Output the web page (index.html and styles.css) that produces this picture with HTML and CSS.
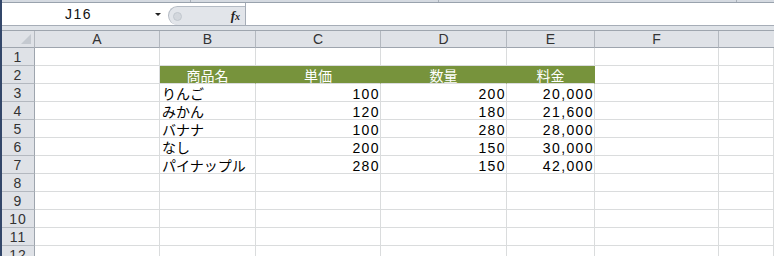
FILE: index.html
```html
<!DOCTYPE html>
<html lang="ja">
<head>
  <meta charset="UTF-8" />
  <title>Book1</title>
  <link rel="stylesheet" href="styles.css">
</head>
<body>
  <!-- bottom edge of the ribbon -->
  <div class="ribbon-edge">
    <span class="sep s1"></span>
    <span class="sep s2"></span>
    <span class="sep s3"></span>
  </div>

  <!-- name box + formula bar -->
  <div class="fbar">
    <div class="namebox">
      <span class="name">J16</span>
      <span class="drop"></span>
    </div>
    <div class="fx-area">
      <span class="knob"></span>
      <span class="fx"><i>f</i><i class="x">x</i></span>
    </div>
    <div class="finput"></div>
  </div>
  <div class="gap"></div>

  <div class="sheet">
    <div class="corner"><span class="tri"></span></div>
    <div class="ch">A</div>
    <div class="ch">B</div>
    <div class="ch">C</div>
    <div class="ch">D</div>
    <div class="ch">E</div>
    <div class="ch">F</div>
    <div class="ch last"></div>

    <div class="rh">1</div>
    <div class="c"></div><div class="c"></div><div class="c"></div><div class="c"></div><div class="c"></div><div class="c"></div><div class="c"></div>

    <div class="rh">2</div>
    <div class="c"></div>
    <div class="c hd">商品名</div>
    <div class="c hd">単価</div>
    <div class="c hd">数量</div>
    <div class="c hd">料金</div>
    <div class="c"></div><div class="c"></div>

    <div class="rh">3</div>
    <div class="c"></div>
    <div class="c txt">りんご</div>
    <div class="c num">100</div>
    <div class="c num">200</div>
    <div class="c num">20,000</div>
    <div class="c"></div><div class="c"></div>

    <div class="rh">4</div>
    <div class="c"></div>
    <div class="c txt">みかん</div>
    <div class="c num">120</div>
    <div class="c num">180</div>
    <div class="c num">21,600</div>
    <div class="c"></div><div class="c"></div>

    <div class="rh">5</div>
    <div class="c"></div>
    <div class="c txt">バナナ</div>
    <div class="c num">100</div>
    <div class="c num">280</div>
    <div class="c num">28,000</div>
    <div class="c"></div><div class="c"></div>

    <div class="rh">6</div>
    <div class="c"></div>
    <div class="c txt">なし</div>
    <div class="c num">200</div>
    <div class="c num">150</div>
    <div class="c num">30,000</div>
    <div class="c"></div><div class="c"></div>

    <div class="rh">7</div>
    <div class="c"></div>
    <div class="c txt">パイナップル</div>
    <div class="c num">280</div>
    <div class="c num">150</div>
    <div class="c num">42,000</div>
    <div class="c"></div><div class="c"></div>

    <div class="rh">8</div>
    <div class="c"></div><div class="c"></div><div class="c"></div><div class="c"></div><div class="c"></div><div class="c"></div><div class="c"></div>

    <div class="rh">9</div>
    <div class="c"></div><div class="c"></div><div class="c"></div><div class="c"></div><div class="c"></div><div class="c"></div><div class="c"></div>

    <div class="rh">10</div>
    <div class="c"></div><div class="c"></div><div class="c"></div><div class="c"></div><div class="c"></div><div class="c"></div><div class="c"></div>

    <div class="rh">11</div>
    <div class="c"></div><div class="c"></div><div class="c"></div><div class="c"></div><div class="c"></div><div class="c"></div><div class="c"></div>

    <div class="rh">12</div>
    <div class="c"></div><div class="c"></div><div class="c"></div><div class="c"></div><div class="c"></div><div class="c"></div><div class="c"></div>
  </div>
</body>
</html>
```

FILE: styles.css
```css
* {
  box-sizing: border-box;
}

html, body {
  margin: 0;
  padding: 0;
  height: 100%;
  overflow: hidden;
  background: #fff;
}

body {
  border-left: 2px solid #33476a;
  font-family: "Noto Sans CJK JP", sans-serif;
  color: #000;
}

/* ribbon edge */
.ribbon-edge {
  position: relative;
  height: 3px;
  background: #d5dae1;
  border-bottom: 1px solid #99a2ad;
}

.sep {
  position: absolute;
  top: 0;
  width: 1px;
  height: 2px;
  background: #a9b0b9;
}
.s1 { left: 188px; }
.s2 { left: 436px; }
.s3 { left: 734px; }

/* formula bar */
.fbar {
  display: flex;
  height: 23px;
  border-bottom: 1px solid #a6adb7;
  background: #fff;
}

.namebox {
  width: 166px;
  display: flex;
  align-items: center;
}

.name {
  flex: 1;
  text-align: center;
  font-family: "Liberation Sans", sans-serif;
  font-size: 14px;
  letter-spacing: 1.5px;
  color: #111;
}

.drop {
  width: 0;
  height: 0;
  margin-right: 7px;
  border-left: 3px solid transparent;
  border-right: 3px solid transparent;
  border-top: 3px solid #222;
}

.fx-area {
  width: 77px;
  margin-top: 3px;
  display: flex;
  align-items: center;
  background: #e2e5ea;
  border: 1px solid #b4bbc4;
  border-right: none;
  border-bottom: none;
  border-radius: 10px 0 0 10px;
}

.knob {
  width: 9px;
  height: 9px;
  margin-left: 4px;
  border-radius: 50%;
  background: #d3d7dd;
  border: 1px solid #c2c8cf;
}

.fx {
  margin-left: auto;
  margin-right: 5px;
  font-family: "Liberation Serif", serif;
  font-weight: bold;
  font-size: 13px;
  color: #222;
}

.fx .x {
  font-size: 10px;
}

.finput {
  flex: 1;
  border-left: 1px solid #a6adb7;
  background: #fff;
}

.gap {
  height: 4px;
  background: #dfe3e8;
}

/* worksheet */
.sheet {
  display: grid;
  grid-template-columns: 33px 125px 96px 125px 126px 88px 124px 1fr;
  grid-template-rows: 17px;
  grid-auto-rows: 18px;
  border-top: 1px solid #9ea5ae;
}

.corner,
.ch {
  background: #dfe2e7;
  border-right: 1px solid #b3b8bf;
  border-bottom: 1px solid #9ea5ae;
}

.corner {
  position: relative;
}

.tri {
  position: absolute;
  right: 3px;
  bottom: 3px;
  width: 0;
  height: 0;
  border-left: 10px solid transparent;
  border-bottom: 10px solid #c4c9d0;
}

.ch {
  text-align: center;
  font-family: "Liberation Sans", sans-serif;
  font-size: 14px;
  line-height: 16px;
  color: #333;
}

.ch.last {
  border-right: none;
}

.rh {
  background: #dfe2e7;
  border-right: 1px solid #9ea5ae;
  border-bottom: 1px solid #b3b8bf;
  text-align: center;
  font-family: "Liberation Sans", sans-serif;
  font-size: 14px;
  letter-spacing: 1px;
  line-height: 16px;
  padding-top: 1px;
  color: #333;
}

.c {
  border-right: 1px solid #dadcdd;
  border-bottom: 1px solid #dadcdd;
  font-size: 14px;
  line-height: 16px;
  padding-top: 1px;
  white-space: nowrap;
  overflow: hidden;
}

.hd {
  background: #77933c;
  border-right-color: #77933c;
  color: #fff;
  text-align: center;
}

.txt {
  padding-left: 2px;
}

.num {
  text-align: right;
  padding-right: 0;
  padding-top: 2px;
  font-family: "Liberation Sans", sans-serif;
  font-size: 14px;
  letter-spacing: 1.4px;
}
```
